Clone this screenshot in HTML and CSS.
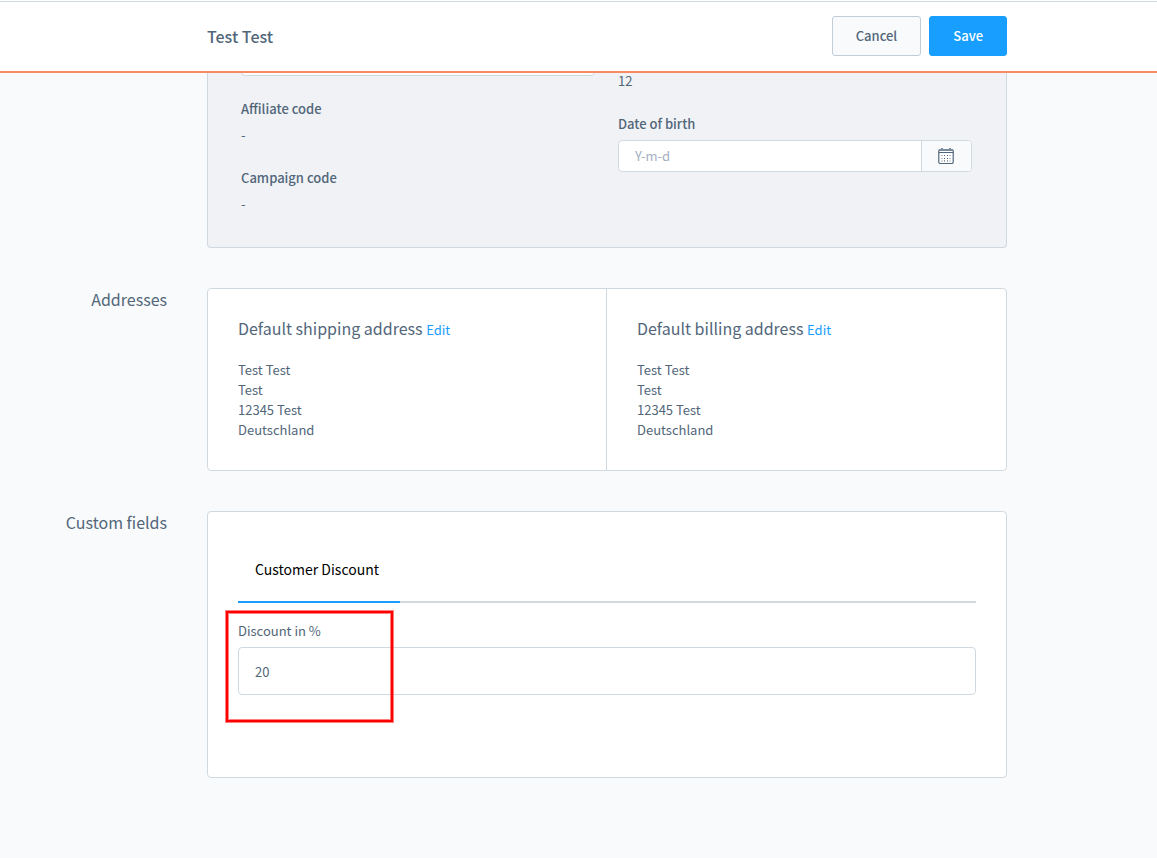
FILE: index.html
```html
<!DOCTYPE html>
<html lang="en">
<head>
<meta charset="utf-8">
<meta name="viewport" content="width=device-width, initial-scale=1">
<title>Test Test</title>
<link rel="stylesheet" href="styles.css">
</head>
<body>
<header class="page-header row">
  <div class="header-bar">
    <h1 class="page-title">Test Test</h1>
    <div class="actions">
      <button type="button" class="btn">Cancel</button>
      <button type="button" class="btn btn-primary">Save</button>
    </div>
  </div>
</header>
<main>
  <section class="row scrolled">
    <form class="card card-account">
      <div class="column">
        <input class="input cut-off" type="text" aria-label="Account field">
        <dl class="facts">
          <dt class="label">Affiliate code</dt>
          <dd>-</dd>
          <dt class="label">Campaign code</dt>
          <dd>-</dd>
        </dl>
      </div>
      <div class="column">
        <p class="number">12</p>
        <label class="label" for="birthday">Date of birth</label>
        <div class="date-field">
          <input class="date-input" id="birthday" type="text" placeholder="Y-m-d">
          <button type="button" class="date-button" aria-label="Open calendar">
            <svg width="16" height="16" viewBox="0 0 16 16" fill="none">
              <rect x=".8" y="1.500" width="14.400" height="14" rx="1.500" fill="#fff" stroke="#52667a" stroke-width="1.200"/>
              <path d="M1 2h14" stroke="#7a8b9b" stroke-width="2"/>
              <path d="M1 4.500h14" stroke="#52667a"/>
              <path d="M3 .5h2M11 .5h2" stroke="#7a8b9b"/>
              <path d="M3 7.500h10M3 10.500h10M3 13h10" stroke="#b4bfc9" stroke-dasharray="2 1 1 2 1 1 2"/>
              <path d="M6 7.500h1M9 7.500h1M6 10.500h1M9 10.500h1M6 13h1M9 13h1" stroke="#52667a"/>
            </svg>
          </button>
        </div>
      </div>
    </form>
  </section>
  <section class="row">
    <h2 class="section-title">Addresses</h2>
    <div class="card card-addresses">
      <div class="address">
        <h3 class="address-title">Default shipping address <a class="edit" href="#">Edit</a></h3>
        <address class="address-lines">Test Test<br>Test<br>12345 Test<br>Deutschland</address>
      </div>
      <div class="address">
        <h3 class="address-title">Default billing address <a class="edit" href="#">Edit</a></h3>
        <address class="address-lines">Test Test<br>Test<br>12345 Test<br>Deutschland</address>
      </div>
    </div>
  </section>
  <section class="row">
    <h2 class="section-title">Custom fields</h2>
    <div class="card card-custom">
      <div class="tabs" role="tablist">
        <button type="button" class="tab" role="tab" aria-selected="true">Customer Discount</button>
      </div>
      <div class="field">
        <label class="field-label" for="discount">Discount in %</label>
        <input class="input" id="discount" type="text" value="20">
        <span class="marker"></span>
      </div>
    </div>
  </section>
</main>
</body>
</html>
```

FILE: styles.css
```css
* { box-sizing: border-box; }

:root {
  --text: #52667a;
  --line: #d1d9e0;
  --blue: #189eff;
}

body {
  margin: 0;
  background: #f9fafb;
  color: var(--text);
  font: 13px/20px "Noto Sans CJK SC", "Open Sans", sans-serif;
}

h1, h2, h3, p, dl, dd { margin: 0; font-weight: 400; }

button, input { font: inherit; color: inherit; }

.row {
  display: grid;
  grid-template-columns: minmax(0, 1fr) minmax(0, 800px) 110px;
  column-gap: 40px;
  margin-bottom: 40px;
}

.page-header {
  margin: 1px 0 0;
  border-top: 1px solid var(--line);
  border-bottom: 2px solid #f88962;
  background: #fff;
  box-shadow: 0 -1px #fff;
}

.header-bar {
  grid-column: 2;
  display: flex;
  align-items: center;
  justify-content: space-between;
  padding: 14px 0 15px;
}

.page-title { font-size: 16px; line-height: 24px; font-weight: 500; }

.actions { display: flex; gap: 8px; }

.btn {
  height: 40px;
  padding: 0 23px;
  border: 1px solid #c3cdd7;
  border-radius: 3px;
  background: #f9fafb;
  font-weight: 500;
}

.btn-primary { border-color: var(--blue); background: var(--blue); color: #fff; }

.card {
  grid-column: 2;
  border: 1px solid var(--line);
  border-radius: 4px;
  background: #fff;
}

.scrolled { overflow: hidden; }

.card-account {
  display: grid;
  grid-template-columns: 1fr 1fr;
  column-gap: 23px;
  padding: 0 34px 33px 33px;
  border-top: 0;
  border-radius: 0 0 4px 4px;
  background: #f0f2f5;
}

.input {
  display: block;
  width: 100%;
  height: 48px;
  padding: 0 16px;
  border: 1px solid var(--line);
  border-radius: 4px;
  background: #fff;
}

.cut-off { margin-top: -45px; margin-bottom: 23px; }

.label { display: block; font-weight: 500; }

.facts dd { margin: 6px 0 23px; }
.facts dd:last-child { margin-bottom: 0; }

.column .number { margin: -2px 0 23px; }

.date-field {
  display: flex;
  height: 32px;
  margin-top: 6px;
  border: 1px solid var(--line);
  border-radius: 4px;
  background: #fff;
  overflow: hidden;
}

.date-input { flex: 1; min-width: 0; border: 0; padding: 0 16px; background: none; }
.date-input::placeholder { color: #a3b0c2; opacity: 1; }

.date-button {
  display: flex;
  align-items: center;
  width: 50px;
  padding: 0 16px;
  border: 0;
  border-left: 1px solid var(--line);
  background: #f9fafb;
}

.section-title { font-size: 16px; line-height: 22px; text-align: right; }

.card-addresses { display: grid; grid-template-columns: 1fr 1fr; }

.address { padding: 27px 30px 30px; }
.address:first-child { border-right: 1px solid var(--line); }

.address-title { font-size: 16px; line-height: 24px; margin-bottom: 18px; }

.edit { color: var(--blue); font-size: 13px; text-decoration: none; }

.address-lines { font-style: normal; }

.card-custom { padding: 24px 30px 82px; }

.tabs { display: flex; border-bottom: 2px solid var(--line); }

.tab {
  height: 67px;
  margin-bottom: -2px;
  padding: 0 21px 0 17px;
  border: 0;
  border-bottom: 2px solid var(--blue);
  background: none;
  color: #000;
  font-size: 14px;
}

.field { position: relative; padding-top: 18px; }

.field-label { display: block; margin-bottom: 6px; }

.marker {
  position: absolute;
  top: 7px;
  left: -13px;
  width: 169px;
  height: 113px;
  border: 1px solid rgba(255, 0, 0, .5);
  box-shadow: inset 0 0 0 2px #f00, inset 0 0 0 3px rgba(255, 0, 0, .5);
  pointer-events: none;
}
```
